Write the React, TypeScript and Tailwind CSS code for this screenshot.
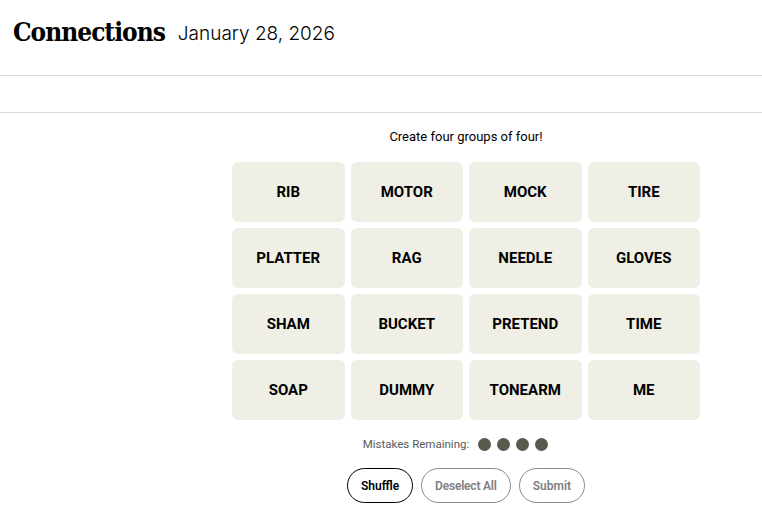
import React from "react";

const words = [
  "RIB", "MOTOR", "MOCK", "TIRE",
  "PLATTER", "RAG", "NEEDLE", "GLOVES",
  "SHAM", "BUCKET", "PRETEND", "TIME",
  "SOAP", "DUMMY", "TONEARM", "ME",
];

export default function App() {
  return (
    <div className="w-[762px] h-[519px] bg-white overflow-hidden" style={{ fontFamily: '"Liberation Sans", Arial, sans-serif' }}>
      <header className="h-[76px] border-b border-[#dcdcdc] flex items-center pl-[13px] pb-[12px]">
        <span className="text-[26px] font-bold font-stretch-condensed text-black tracking-[-1px] leading-none" style={{ fontFamily: '"DejaVu Serif", serif' }}>
          Connections
        </span>
        <span className="ml-[13px] mt-[3px] text-[19px] text-black leading-none" style={{ fontFamily: '"Inter", sans-serif', fontWeight: 300 }}>
          January 28, 2026
        </span>
      </header>
      <div className="h-[37px] border-b border-[#dcdcdc]" />
      <main className="pl-[232px] w-[700px]">
        <p className="text-center text-[13px] text-black mt-[16px] leading-[16px]" style={{ fontFamily: '"Roboto", sans-serif' }}>
          Create four groups of four!
        </p>
        <div className="grid grid-cols-4 gap-[6px] mt-[17px] w-[468px]">
          {words.map((w) => (
            <div key={w} className="h-[60px] rounded-[6px] bg-[#efefe6] flex items-center justify-center text-[15px] font-bold text-black" style={{ fontFamily: '"Roboto", sans-serif' }}>
              {w}
            </div>
          ))}
        </div>
        <div className="flex items-center justify-center mt-[16px] gap-[9px] pr-[21px]" style={{ fontFamily: '"Roboto", sans-serif' }}>
          <span className="text-[11.5px] text-[#5a5a5a]">Mistakes Remaining:</span>
          <div className="flex gap-[6px]">
            {[0, 1, 2, 3].map((i) => (
              <span key={i} className="w-[13px] h-[13px] rounded-full bg-[#5a594e]" />
            ))}
          </div>
        </div>
        <div className="flex justify-center gap-[8px] mt-[15px]" style={{ fontFamily: '"Roboto", sans-serif' }}>
          <button className="h-[35px] px-[13px] rounded-full border border-black text-[12px] font-semibold text-black">Shuffle</button>
          <button className="h-[35px] px-[13px] rounded-full border border-[#8a8a8a] text-[12px] font-semibold text-[#7f7f7f] tracking-[-0.2px]">Deselect All</button>
          <button className="h-[35px] px-[13px] rounded-full border border-[#8a8a8a] text-[12px] font-semibold text-[#7f7f7f]">Submit</button>
        </div>
      </main>
    </div>
  );
}
